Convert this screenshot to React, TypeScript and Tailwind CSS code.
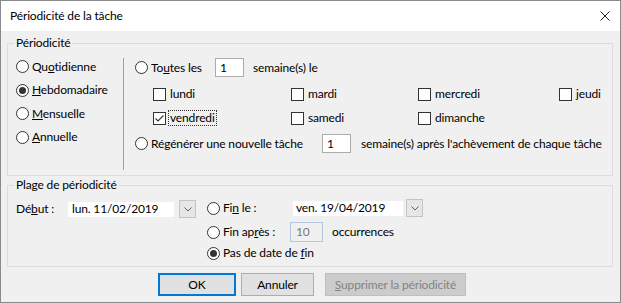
import React from "react";

const Radio = ({ checked = false }: { checked?: boolean }) => (
  <span className="w-[13px] h-[13px] rounded-full border border-[#333333] bg-white flex items-center justify-center shrink-0">
    {checked && <span className="w-[7px] h-[7px] rounded-full bg-[#333333]" />}
  </span>
);

const Check = ({ checked = false }: { checked?: boolean }) => (
  <span className="w-[13px] h-[13px] border border-[#333333] bg-white flex items-center justify-center shrink-0">
    {checked && (
      <svg width="11" height="11" viewBox="0 0 11 11">
        <path d="M1.5 5.5 L4 8 L9.5 2.5" stroke="#333333" fill="none" strokeWidth="1.1" />
      </svg>
    )}
  </span>
);

const DropBtn = () => (
  <span className="w-[17px] h-[18px] border border-[#c4c4c4] bg-[#e6e6e6] flex items-center justify-center shrink-0">
    <svg width="8" height="5" viewBox="0 0 8 5">
      <path d="M0.5 0.5 L4 4 L7.5 0.5" stroke="#606060" fill="none" strokeWidth="1" />
    </svg>
  </span>
);

const Day = ({ label, checked = false, focus = false }: { label: string; checked?: boolean; focus?: boolean }) => (
  <div className="flex items-center h-[24px]">
    <Check checked={checked} />
    <span className={focus ? "ml-[3px] px-[1px] leading-[14px] outline outline-1 outline-dotted outline-[#333333]" : "ml-[4px]"}>
      {label}
    </span>
  </div>
);

export default function App() {
  return (
    <div className="w-[621px] h-[303px] border border-[#8a8a8a] bg-[#f0f0f0] flex flex-col font-['Lato',sans-serif] text-[12px] tracking-[-0.15px] text-black leading-[16px] overflow-hidden">
      <div className="h-[30px] bg-white flex items-center justify-between pl-[9px] pr-[10px] shrink-0">
        <span className="text-[12px]">Périodicité de la tâche</span>
        <svg width="10" height="10" viewBox="0 0 10 10">
          <path d="M0.5 0.5 L9.5 9.5 M9.5 0.5 L0.5 9.5" stroke="#222" strokeWidth="1" />
        </svg>
      </div>

      <div className="pl-[6px] flex flex-col">
        <fieldset className="mt-[4px] w-[606px] h-[141px] border border-[#dcdcdc]">
          <legend className="ml-[6px] px-[2px] leading-[16px]">Périodicité</legend>
          <div className="flex">
            <div className="w-[115px] pl-[8px] pt-[4px] flex flex-col">
              <div className="h-[23.5px] flex items-center">
                <Radio />
                <span className="ml-[3px]">Qu<u>o</u>tidienne</span>
              </div>
              <div className="h-[23.5px] flex items-center">
                <Radio checked />
                <span className="ml-[3px]"><u>H</u>ebdomadaire</span>
              </div>
              <div className="h-[23.5px] flex items-center">
                <Radio />
                <span className="ml-[3px]"><u>M</u>ensuelle</span>
              </div>
              <div className="h-[23.5px] flex items-center">
                <Radio />
                <span className="ml-[3px]"><u>A</u>nnuelle</span>
              </div>
            </div>
            <div className="w-px h-[112px] mt-[7px] bg-[#a0a0a0]" />
            <div className="pl-[11px] flex flex-col">
              <div className="mt-[7px] h-[19px] flex items-center">
                <Radio />
                <span className="ml-[3px] w-[64px]">To<u>u</u>tes les</span>
                <span className="w-[29px] h-[19px] border border-[#acacac] bg-white pl-[4px] flex items-center">1</span>
                <span className="ml-[9px]">semaine(s) le</span>
              </div>
              <div className="mt-[5px] ml-[18px] grid grid-cols-[138px_127px_141px_auto]">
                <Day label="lundi" />
                <Day label="mardi" />
                <Day label="mercredi" />
                <Day label="jeudi" />
                <Day label="vendredi" checked focus />
                <Day label="samedi" />
                <Day label="dimanche" />
              </div>
              <div className="mt-[4px] h-[19px] flex items-center">
                <Radio />
                <span className="ml-[3px] w-[171px]">Ré<u>g</u>énérer une nouvelle tâche</span>
                <span className="w-[29px] h-[19px] border border-[#acacac] bg-white pl-[4px] flex items-center">1</span>
                <span className="ml-[10px]">semaine(s) après l'achèvement de chaque tâche</span>
              </div>
            </div>
          </div>
        </fieldset>

        <fieldset className="mt-[1px] w-[606px] h-[90px] border border-[#dcdcdc]">
          <legend className="ml-[6px] px-[2px] leading-[16px]">Plage de périodicité</legend>
          <div className="flex">
            <div className="pl-[8px] mt-[4px] h-[24px] flex items-center">
              <span className="w-[52px]">Dé<u>b</u>ut :</span>
              <span className="w-[106px] h-[15px] bg-white pl-[4px] flex items-center">lun. 11/02/2019</span>
              <span className="ml-[5px]"><DropBtn /></span>
            </div>
            <div className="ml-[11px] mt-[3px] flex flex-col">
              <div className="h-[24px] flex items-center">
                <Radio />
                <span className="ml-[3px] w-[70px]">Fi<u>n</u> le :</span>
                <span className="w-[110px] h-[15px] bg-white pl-[3px] flex items-center">ven. 19/04/2019</span>
                <span className="ml-[3px]"><DropBtn /></span>
              </div>
              <div className="h-[24px] flex items-center">
                <Radio />
                <span className="ml-[3px] w-[67px]">Fin ap<u>r</u>ès :</span>
                <span className="w-[33px] h-[20px] border border-[#b5c7dc] bg-[#f0f0f0] pl-[5px] text-[#7a7a7a] flex items-center">10</span>
                <span className="ml-[9px]">occurrences</span>
              </div>
              <div className="h-[18px] flex items-center">
                <Radio checked />
                <span className="ml-[3px]">Pas de date de <u>f</u>in</span>
              </div>
            </div>
          </div>
        </fieldset>
      </div>

      <div className="mt-[6px] pl-[157px] flex">
        <button className="w-[78px] h-[23px] border-2 border-[#0078d7] bg-[#e1e1e1] flex items-center justify-center">OK</button>
        <button className="ml-[5px] w-[73px] h-[23px] border border-[#adadad] bg-[#e1e1e1] flex items-center justify-center">Annuler</button>
        <button className="ml-[11px] w-[141px] h-[23px] border border-[#bfbfbf] bg-[#cccccc] text-[#838383] flex items-center justify-center">
          <span><u>S</u>upprimer la périodicité</span>
        </button>
      </div>
    </div>
  );
}
